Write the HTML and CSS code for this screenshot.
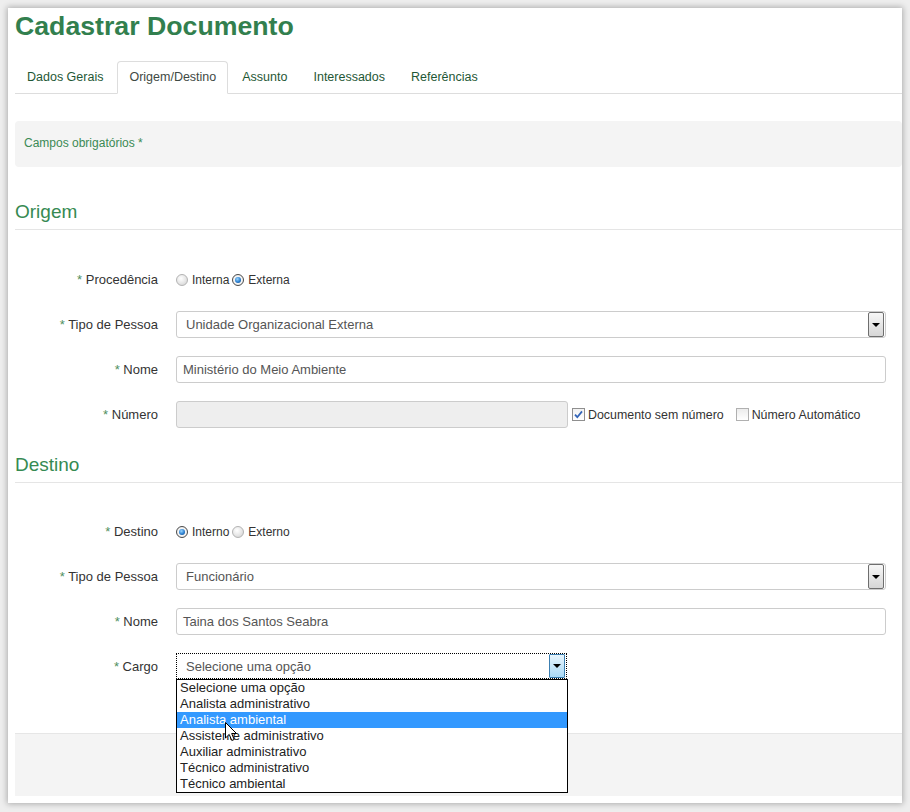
FILE: index.html
```html
<!DOCTYPE html>
<html lang="pt-BR">
<head>
<meta charset="utf-8">
<title>Cadastrar Documento</title>
<link rel="stylesheet" href="styles.css">
</head>
<body>
<div class="window">
  <h1 class="title">Cadastrar Documento</h1>
  <ul class="tabs">
    <li><a>Dados Gerais</a></li>
    <li class="active"><a>Origem/Destino</a></li>
    <li><a>Assunto</a></li>
    <li><a>Interessados</a></li>
    <li><a>Referências</a></li>
  </ul>
  <div class="notice">Campos obrigatórios *</div>

  <h3 class="section-title">Origem</h3>
  <div class="form">
    <div class="lbl"><span class="req">*</span> Procedência</div>
    <div class="ctrl radios">
      <span class="radio"></span><span class="opt">Interna</span>
      <span class="radio checked"></span><span class="opt">Externa</span>
    </div>

    <div class="lbl"><span class="req">*</span> Tipo de Pessoa</div>
    <div class="ctrl">
      <div class="select"><span class="sel-text">Unidade Organizacional Externa</span><span class="sel-btn"><span class="tri"></span></span></div>
    </div>

    <div class="lbl"><span class="req">*</span> Nome</div>
    <div class="ctrl"><div class="input">Ministério do Meio Ambiente</div></div>

    <div class="lbl"><span class="req">*</span> Número</div>
    <div class="ctrl checks">
      <div class="input disabled half"></div>
      <span class="checkbox checked"><svg width="11" height="11" viewBox="0 0 11 11"><path d="M2 5.6 L4.3 8.2 L9 2.4" fill="none" stroke="#3465b8" stroke-width="1.8"/></svg></span>
      <span class="chk-label">Documento sem número</span>
      <span class="checkbox second"></span>
      <span class="chk-label">Número Automático</span>
    </div>
  </div>

  <h3 class="section-title destino">Destino</h3>
  <div class="form form-destino">
    <div class="lbl"><span class="req">*</span> Destino</div>
    <div class="ctrl radios">
      <span class="radio checked"></span><span class="opt">Interno</span>
      <span class="radio"></span><span class="opt">Externo</span>
    </div>

    <div class="lbl"><span class="req">*</span> Tipo de Pessoa</div>
    <div class="ctrl">
      <div class="select"><span class="sel-text">Funcionário</span><span class="sel-btn"><span class="tri"></span></span></div>
    </div>

    <div class="lbl"><span class="req">*</span> Nome</div>
    <div class="ctrl"><div class="input">Taina dos Santos Seabra</div></div>

    <div class="lbl"><span class="req">*</span> Cargo</div>
    <div class="ctrl">
      <div class="select focus half-sel"><span class="sel-text">Selecione uma opção</span><span class="sel-btn blue"><span class="tri"></span></span>
        <ul class="dropdown">
          <li>Selecione uma opção</li>
          <li>Analista administrativo</li>
          <li class="hl">Analista ambiental</li>
          <li>Assistente administrativo</li>
          <li>Auxiliar administrativo</li>
          <li>Técnico administrativo</li>
          <li>Técnico ambiental</li>
          <svg class="cursor" width="13" height="20" viewBox="0 0 13 20"><path d="M0.5 0.5 L0.5 16 L4.2 12.4 L6.8 18.5 L9.2 17.5 L6.7 11.5 L11.5 11.5 Z" fill="#fff" stroke="#000" stroke-width="1" stroke-linejoin="miter"/></svg>
        </ul>
      </div>
    </div>
  </div>

  <div class="footer"></div>
</div>
</body>
</html>
```

FILE: styles.css
```css
html, body {
  margin: 0;
  padding: 0;
}
body {
  background: #eeeeee;
  padding: 8px;
  font-family: "Liberation Sans", Arial, sans-serif;
  color: #333;
}
.window {
  box-sizing: border-box;
  width: 894px;
  height: 795px;
  background: #fff;
  padding: 0 0 7px 7px;
  box-shadow: 0 0 6px 1px rgba(0, 0, 0, 0.28);
  overflow: hidden;
}
.title {
  margin: 3px 0 0 0;
  font-size: 26.7px;
  line-height: 30px;
  font-weight: bold;
  color: #327f4e;
}
.tabs {
  list-style: none;
  margin: 20px 0 0 0;
  padding: 0;
  display: flex;
  border-bottom: 1px solid #dddddd;
}
.tabs li {
  margin: 0 2px -1px 0;
}
.tabs a {
  display: block;
  padding: 6px 11px 7px;
  border: 1px solid transparent;
  border-radius: 4px 4px 0 0;
  font-size: 12.5px;
  line-height: 18px;
  color: #1f5836;
}
.tabs li.active a {
  border-color: #dddddd #dddddd transparent;
  background: #fff;
  color: #3f4a44;
}
.notice {
  margin-top: 27px;
  height: 46px;
  box-sizing: border-box;
  padding: 13px 9px 15px;
  background: #f4f4f4;
  border-radius: 4px;
  font-size: 12px;
  line-height: 18px;
  color: #3b8a55;
}
.section-title {
  margin: 33px 0 0 0;
  padding-bottom: 6px;
  border-bottom: 1px solid #e5e5e5;
  font-size: 19px;
  line-height: 23px;
  font-weight: normal;
  color: #368a52;
}
.section-title.destino {
  margin-top: 25px;
}
.form {
  margin-top: 36px;
  display: grid;
  grid-template-columns: 143px 710px;
  column-gap: 18px;
  row-gap: 18px;
  grid-auto-rows: 27px;
}
.form-destino {
  margin-top: 35px;
}
.lbl {
  text-align: right;
  font-size: 13px;
  line-height: 27px;
  color: #333;
}
.req {
  color: #4f8f60;
}
.ctrl {
  position: relative;
  display: flex;
  align-items: center;
}
.radios {
  font-size: 12px;
  color: #333;
}
.radio {
  box-sizing: border-box;
  width: 12px;
  height: 12px;
  border-radius: 50%;
  border: 1px solid #b3b3b3;
  background: radial-gradient(circle at 40% 35%, #ffffff 0%, #e8e8e8 50%, #cfcfcf 100%);
  margin-right: 4px;
  position: relative;
}
.radio.checked {
  border-color: #4a4a4a;
  background: radial-gradient(circle at 50% 50%, #f4f4f4 60%, #cfcfcf 100%);
}
.radio.checked::after {
  content: "";
  position: absolute;
  left: 2px;
  top: 2px;
  width: 6px;
  height: 6px;
  border-radius: 50%;
  background: radial-gradient(circle at 40% 35%, #9ad6ff 0%, #2a7fd0 55%, #0b3f7a 100%);
}
.opt {
  margin-right: 3px;
}
.select {
  position: relative;
  box-sizing: border-box;
  width: 710px;
  height: 27px;
  border: 1px solid #cccccc;
  border-radius: 3px;
  display: flex;
  align-items: center;
  padding-left: 9px;
  font-size: 13px;
  color: #555;
  background: #fff;
}
.sel-btn {
  margin-left: auto;
  margin-right: 1px;
  box-sizing: border-box;
  width: 16px;
  height: 25px;
  border: 1px solid #6e6e6e;
  border-radius: 2px;
  background: linear-gradient(#f7f7f7, #d6d6d6);
  display: flex;
  align-items: center;
  justify-content: center;
}
.tri {
  width: 0;
  height: 0;
  border-left: 4px solid transparent;
  border-right: 4px solid transparent;
  border-top: 4px solid #000;
}
.select.focus {
  height: 26px;
  border: 1px dotted #000;
  border-radius: 0;
  align-self: flex-start;
}
.half-sel {
  width: 391px;
}
.sel-btn.blue {
  height: 24px;
  border-color: #3c7fb1;
  border-radius: 1px;
  background: linear-gradient(#e8f5fd, #a9d9f6);
}
.input {
  box-sizing: border-box;
  width: 710px;
  height: 27px;
  border: 1px solid #cccccc;
  border-radius: 3px;
  padding-left: 6px;
  font-size: 13px;
  line-height: 25px;
  color: #555;
  background: #fff;
}
.input.disabled {
  background: #eeeeee;
}
.input.half {
  width: 392px;
  flex: none;
}
.checks {
  font-size: 12.4px;
  color: #333;
}
.checkbox {
  box-sizing: border-box;
  width: 13px;
  height: 13px;
  border: 1px solid #8f8f8f;
  background: linear-gradient(#f2f2f2, #ffffff);
  margin-left: 4px;
  margin-right: 3px;
  display: flex;
  align-items: center;
  justify-content: center;
}
.checkbox.second {
  border-color: #b0b0b0;
  margin-left: 12px;
  background: linear-gradient(#ececec, #ffffff);
}
.dropdown {
  position: absolute;
  left: -1px;
  top: 25px;
  z-index: 5;
  box-sizing: border-box;
  width: 392px;
  margin: 0;
  padding: 0;
  list-style: none;
  border: 1px solid #000;
  background: #fff;
}
.dropdown li {
  height: 16px;
  line-height: 16px;
  padding-left: 3px;
  font-size: 13px;
  color: #222;
}
.dropdown li.hl {
  background: #3399ff;
  color: #fff;
}
.cursor {
  position: absolute;
  left: 48px;
  top: 42px;
}
.footer {
  margin-top: 53px;
  height: 63px;
  box-sizing: border-box;
  background: #f4f4f4;
  border-top: 1px solid #e6e6e6;
}
```
